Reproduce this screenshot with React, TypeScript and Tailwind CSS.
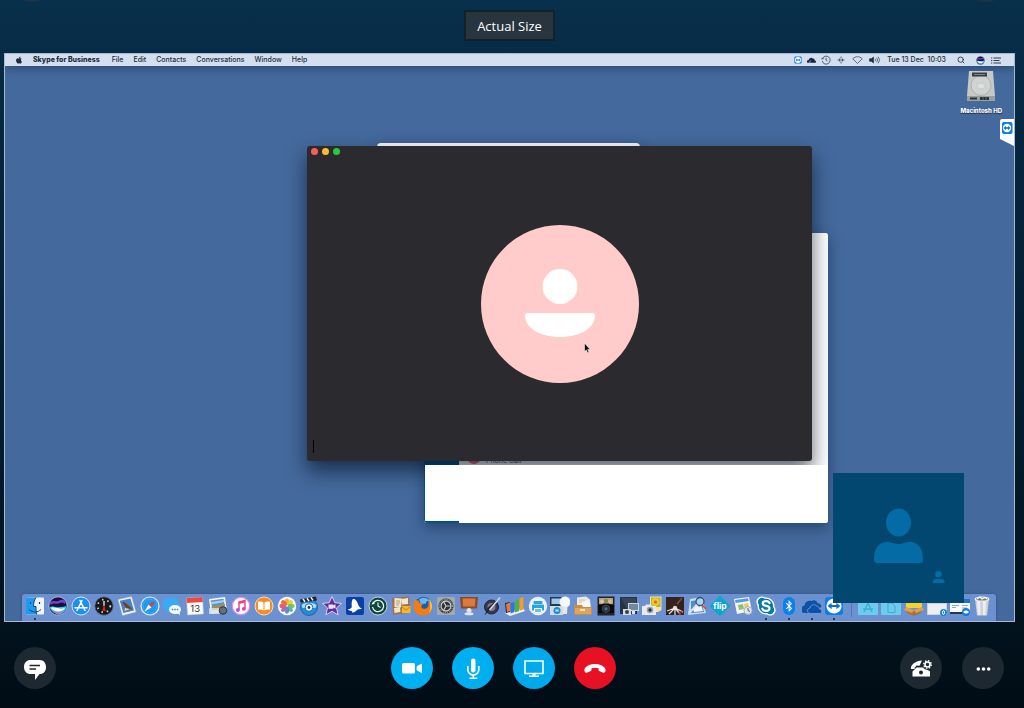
import type { ReactNode } from "react";
import { FaApple, FaBluetoothB } from "react-icons/fa";
import { Search } from "lucide-react";

type DockApp = { name: string; running?: boolean; art: ReactNode };

const TeamViewerArt = () => (
  <>
    <rect x="1" y="1" width="18" height="18" rx="3" fill="#0b7de8" />
    <circle cx="10" cy="10" r="7.6" fill="#fff" />
    <path d="M3.6 10 7.6 6.8V9h4.8V6.8l4 3.2-4 3.2V11H7.6v2.2z" fill="#0a6ed6" />
  </>
);

const SiriArt = () => (
  <>
    <circle cx="10" cy="10" r="9.2" fill="#15123c" stroke="#c9cde6" strokeWidth="0.8" />
    <path d="M2 8c3-4 6 0 9-2 3-1.500 5-1 6.500 1" fill="none" stroke="#7b3fd6" strokeWidth="2.500" />
    <path d="M1.500 11c4-2 7 2 17-1l-1 4c-2 3-5 4.500-7 4.500s-7-2-9-7.500z" fill="#2bd0ee" />
    <path d="M4 14c3 2.500 9 2.500 12 0-2 4-9 5-12 0z" fill="#e758c2" />
    <path d="M3 12c4-1.500 7 2 14 0-2 4-10 5-14 0z" fill="#fff" />
  </>
);

const apps: DockApp[] = [
  {
    name: "Finder",
    running: true,
    art: (
      <>
        <rect x="1" y="1.500" width="18" height="17" rx="1" fill="#f0f5fb" />
        <path d="M1 1.500h10c-2 3-2.500 6-2.400 9h2.400c0 3 .2 6 .8 8H1z" fill="#1e9bf0" />
        <path d="M11 1.500c-2 3-2.500 6-2.400 9H11c0 3 .2 6 .8 8M4 13.500c4 3.300 8.500 3.300 12 0" fill="none" stroke="#123a66" strokeWidth="0.9" />
        <path d="M5.500 6v2M14.500 6v2" stroke="#123a66" strokeWidth="1.200" />
      </>
    ),
  },
  { name: "Siri", art: <SiriArt /> },
  {
    name: "App Store",
    art: (
      <>
        <circle cx="10" cy="10" r="9" fill="#1b8ff2" stroke="#d9e5f4" strokeWidth="1" />
        <path d="M11 4.500 6 14.500M9 4.500l5 10M4 11.800h12" stroke="#fff" strokeWidth="1.500" strokeLinecap="round" />
      </>
    ),
  },
  {
    name: "Dashboard",
    art: (
      <>
        <circle cx="10" cy="10" r="9.200" fill="#16191c" stroke="#6d7278" strokeWidth="0.8" />
        <circle cx="10" cy="10" r="6.300" fill="none" stroke="#d5d9dc" strokeWidth="1.800" strokeDasharray="1.400 4" />
        <path d="M10 5v5" stroke="#f6f6f6" strokeWidth="1.300" />
        <path d="m10 8 1.700 7H8.300z" fill="#df1d23" />
      </>
    ),
  },
  {
    name: "Mail",
    art: (
      <>
        <path d="m1 3.500 13.500-3 4.500 15.500-13.500 3.500z" fill="#f4f4ef" stroke="#b5b5ae" strokeWidth="0.500" />
        <path d="m2.800 4.800 10.700-2.400 3.500 12-10.700 2.700z" fill="#4a83c4" />
        <path d="M5 6c3-.5 4 1 6 3 2 1 3 3 4.500 4-3 .5-4 .5-6-.8C7.500 11 7 8.500 5 6z" fill="#6a4629" />
        <path d="m8 12 5 1-5.500 2z" fill="#e2d3ab" />
      </>
    ),
  },
  {
    name: "Safari",
    art: (
      <>
        <circle cx="10" cy="10" r="9" fill="#1d9af0" stroke="#e7ebef" strokeWidth="1.200" />
        <circle cx="10" cy="10" r="7" fill="none" stroke="#8fd0fa" strokeDasharray=".5 1.200" />
        <path d="m15.500 4.500-4 7-3-3z" fill="#e73a36" />
        <path d="m4.500 15.500 4-7 3 3z" fill="#f5f7f8" />
      </>
    ),
  },
  {
    name: "Messages",
    art: (
      <>
        <path d="M9 1.500c5 0 8.500 2.900 8.500 6.900S14 15.500 9 15.500l-5 2 1-3C2 13 .5 11 .5 8.400.5 4.400 4 1.500 9 1.500z" fill="#39aaf6" />
        <ellipse cx="13" cy="13.500" rx="6" ry="4.600" fill="#fafcff" />
        <path d="m15 17 3 2-.5-3.500z" fill="#fafcff" />
        <circle cx="10.500" cy="13.500" r=".9" fill="#4a91d8" />
        <circle cx="13" cy="13.500" r=".9" fill="#4a91d8" />
        <circle cx="15.500" cy="13.500" r=".9" fill="#4a91d8" />
      </>
    ),
  },
  {
    name: "Calendar",
    art: (
      <>
        <path d="m1.500 2 16-1 1 17-16 1z" fill="#fbfbfb" stroke="#b9bec5" strokeWidth="0.500" />
        <path d="m1.500 2 16-1 .3 5-16 1z" fill="#f2473f" />
        <text x="10.200" y="16" fontSize="9.500" textAnchor="middle" fill="#333" fontFamily="Inter, sans-serif">13</text>
      </>
    ),
  },
  {
    name: "Preview",
    art: (
      <>
        <path d="m1 3 16-2 2 14-16 3z" fill="#f6f6f2" />
        <path d="m2.500 4.500 13-1.800 1.500 9.300-12 2.300z" fill="#5b93c6" />
        <path d="m3 6 13-2 .3 2-13 2.500z" fill="#a8d0ec" />
        <path d="m3.500 10.500 13-3 .6 4.700-13 2.200z" fill="#a08c66" />
        <path d="M1 12h13l-1 6H1z" fill="#dce3e8" opacity=".8" />
        <circle cx="15" cy="14.500" r="3.800" fill="#63717d" stroke="#2b333a" />
      </>
    ),
  },
  {
    name: "iTunes",
    art: (
      <>
        <circle cx="10" cy="10" r="8.700" fill="#fff" stroke="#e58ae0" strokeWidth="1.200" />
        <path d="M8 14V6l6-1.500v8" fill="none" stroke="#ee3d78" strokeWidth="1.400" />
        <path d="M8 6.500 14 5v1.600L8 8z" fill="#ee3d78" />
        <circle cx="6.900" cy="14" r="1.900" fill="#a94df0" />
        <circle cx="12.800" cy="12.800" r="1.900" fill="#e23bb0" />
      </>
    ),
  },
  {
    name: "iBooks",
    art: (
      <>
        <circle cx="10" cy="10" r="9" fill="#fb8b1c" stroke="#f4dfc5" />
        <path d="M9.500 6.500c-1.600-1.200-3.600-1.300-5.500-.8v8c2-.5 4-.3 5.500.8zM10.500 6.500c1.600-1.200 3.600-1.300 5.500-.8v8c-2-.5-4-.3-5.500.8z" fill="#fff" />
      </>
    ),
  },
  {
    name: "Photos",
    art: (
      <>
        <circle cx="10" cy="10" r="9.200" fill="#fbfbf8" />
        <g opacity=".9">
          <ellipse cx="10" cy="5.800" rx="2.200" ry="3.400" fill="#f9a52b" />
          <ellipse cx="10" cy="5.800" rx="2.200" ry="3.400" fill="#d7cf2f" transform="rotate(45 10 10)" />
          <ellipse cx="10" cy="5.800" rx="2.200" ry="3.400" fill="#72bf44" transform="rotate(90 10 10)" />
          <ellipse cx="10" cy="5.800" rx="2.200" ry="3.400" fill="#43b3a0" transform="rotate(135 10 10)" />
          <ellipse cx="10" cy="5.800" rx="2.200" ry="3.400" fill="#4a83d3" transform="rotate(180 10 10)" />
          <ellipse cx="10" cy="5.800" rx="2.200" ry="3.400" fill="#9760b8" transform="rotate(225 10 10)" />
          <ellipse cx="10" cy="5.800" rx="2.200" ry="3.400" fill="#d4526e" transform="rotate(270 10 10)" />
          <ellipse cx="10" cy="5.800" rx="2.200" ry="3.400" fill="#ee5a36" transform="rotate(315 10 10)" />
        </g>
      </>
    ),
  },
  {
    name: "DVD Player",
    art: (
      <>
        <circle cx="10" cy="11" r="8.500" fill="#1f8fdc" stroke="#0e3f70" strokeWidth=".6" />
        <path d="M2.500 9c4-3 11-3 15 0l-1 3H3.500z" fill="#a4ddfa" />
        <path d="m1 3.500 16-3 1 4-16.500 2z" fill="#202429" />
        <path d="m4 3 2 2.800M8 2.200l2 2.900M12 1.400l2 3" stroke="#f3f3f3" strokeWidth="1.500" />
        <circle cx="10" cy="11.500" r="3.800" fill="#eef5fa" stroke="#2d6aa5" />
        <circle cx="10" cy="11.500" r="1.400" fill="#1c3857" />
      </>
    ),
  },
  {
    name: "iMovie",
    art: (
      <>
        <path d="m10 .5 2.800 6.200 6.700.7-5 4.500 1.500 6.900-6-3.500-6 3.500 1.500-6.900-5-4.500 6.700-.7z" fill="#5f2e9f" stroke="#e7d9f4" strokeWidth="0.900" />
        <path d="M6.500 8.500h4.800v1l2.200-1.200v4.400l-2.200-1.200v1.200H6.500z" fill="#efe4ff" />
      </>
    ),
  },
  {
    name: "Vectorworks",
    art: (
      <>
        <rect x="1" y="1" width="18" height="18" rx="2" fill="#0a3fa6" />
        <path d="M7.500 3.500c2-1.500 4 1 5 3.500.8 2.500 2 4.500 4.500 6-2 .2-3 0-4.500.5-1.500 1.500-3 3.500-5.500 3 .5-1 0-1.700-1.500-1.800-1.500 0-2-.7-2.500-1.700 2 .2 3-.5 3.800-2C6.500 8.500 6.500 5.500 7.500 3.500z" fill="#fff" />
      </>
    ),
  },
  {
    name: "Time Machine",
    art: (
      <>
        <circle cx="10" cy="10" r="9" fill="#10453f" stroke="#c3d1cf" />
        <path d="M5 7.500a5.600 5.600 0 1 1-.5 3.500" fill="none" stroke="#e4f4ee" strokeWidth="1.300" />
        <path d="m3.500 8.500 3.500-.5-2-2.500z" fill="#e4f4ee" />
        <path d="M10 6.500V10l2.500 1.500" fill="none" stroke="#e4f4ee" strokeWidth="1.200" />
      </>
    ),
  },
  {
    name: "Stickies",
    art: (
      <>
        <path d="m1 2 17-1.500 1.500 16L2 19z" fill="#a1714a" />
        <path d="m3.500 2 7.500.5-1 9-6.500-.5zM11 3l6-1v6l-6 .5z" fill="#f1e7d0" />
        <path d="M5 5h4M5 7h4M5 9h3" stroke="#907c67" strokeWidth=".7" />
        <path d="m3 12 6-1 .5 5-6 1z" fill="#efe5cc" />
        <path d="M11 10h8.500v7H11z" fill="#f6b826" />
        <path d="m11 11 4 3 4-3" fill="none" stroke="#c98110" />
      </>
    ),
  },
  {
    name: "Firefox",
    art: (
      <>
        <circle cx="10.500" cy="9.500" r="8.800" fill="#1c5db0" />
        <path d="M6 3.500c4-3 8-2 11 1.500-3-.5-4 .5-4 2.500L8 8z" fill="#63b9ee" />
        <path d="M1.500 3.500c1.500 1 3 .8 4.500 1.500-.5 2 2 2.500 4 3C8.500 9 8 10 8.500 11.500c1.500 2 4.500 1.500 6 0 1.500-1.800 1.500-4.500 0-6.500 3 1 5 4.500 4.500 8C18 17.500 14 19.800 9.500 19.500 4 19 .3 15.500.5 10c0-2.500.5-4.500 1-6.500z" fill="#f37b13" />
        <path d="M15.500 2.500c4.500 3.500 5 10 .5 14.500 2-5 1.500-10-.5-14.500z" fill="#fcc43c" />
      </>
    ),
  },
  {
    name: "System Preferences",
    art: (
      <>
        <rect x="1" y="1" width="18" height="18" rx="1.500" fill="#a7a9a8" />
        <circle cx="10" cy="10" r="7.500" fill="#303335" />
        <circle cx="10" cy="10" r="5" fill="none" stroke="#c8caca" strokeWidth="1.300" />
        <path d="M10 10h5M10 10l-2.500-4.500M10 10l-2.500 4.500" stroke="#c8caca" strokeWidth="1.200" />
        <circle cx="10" cy="10" r="6.600" fill="none" stroke="#c8caca" strokeDasharray="1 1.100" />
      </>
    ),
  },
  {
    name: "Keynote",
    art: (
      <>
        <path d="M1 1h18l-1 11.500H2z" fill="#8c4a24" />
        <path d="M3.500 2.500h13l-.6 8H4z" fill="#dc7a39" />
        <path d="M9.300 12h1.400v6H9.300z" fill="#8ba1bb" />
        <ellipse cx="10" cy="17.800" rx="4.500" ry="1.500" fill="#dfe7f0" />
        <circle cx="10" cy="14.500" r="2.500" fill="#dbe2ea" />
      </>
    ),
  },
  {
    name: "GarageBand",
    art: (
      <>
        <circle cx="9.500" cy="11" r="7" fill="#38384a" stroke="#252635" />
        <circle cx="9.500" cy="11" r="4" fill="#7c7c98" />
        <path d="M18.500 1 9 13l-6.500 6.500L6 11.500z" fill="#21252e" />
        <path d="M18 1.500 7.500 14" stroke="#dbe0e9" strokeWidth="1.500" />
      </>
    ),
  },
  {
    name: "Numbers",
    art: (
      <>
        <path d="m0 17 18-5 2 3-15 5z" fill="#f1f3f7" />
        <path d="m0 7 5-1v10l-4 1z" fill="#1e2b3a" />
        <path d="m1 8 4-1.500V15l-3 1z" fill="#f0782a" />
        <path d="m5.500 7 4-1v10l-4 1.500z" fill="#2f72e6" />
        <path d="m10 4.500 4-1V15l-4 1.500z" fill="#4cb33f" />
        <path d="m14.500 2 4-1v12.500l-4 1.300z" fill="#f29b28" />
      </>
    ),
  },
  {
    name: "Printer",
    art: (
      <>
        <circle cx="10" cy="10" r="9.200" fill="#eef6fb" />
        <circle cx="10" cy="10" r="7.700" fill="#fff" stroke="#c5dbe8" strokeWidth=".5" />
        <path d="M5.500 5h9v3h-9zM4 8.500h12v6h-2V12H6v2.500H4z" fill="#2aa5dc" />
        <path d="M7 13h6v3H7z" fill="#63c0e7" />
      </>
    ),
  },
  {
    name: "HP Utility",
    art: (
      <>
        <path d="M0 1h12v9H0z" fill="#26394b" />
        <path d="M1.500 2.500h9V8h-9z" fill="#9cc8ea" />
        <path d="M0 10h13v9H0z" fill="#d4dbe0" />
        <circle cx="7" cy="14.500" r="3.500" fill="#168bd4" />
        <path d="M6 13v3M8 13v3M6 14.500h2" stroke="#fff" strokeWidth=".7" />
        <circle cx="15" cy="6" r="5.500" fill="#f6f9fa" stroke="#c2cacf" strokeWidth=".5" />
        <path d="M12.500 10.500h5L17 18h-4z" fill="#e3e8ea" />
      </>
    ),
  },
  {
    name: "Archive",
    art: (
      <>
        <path d="m4 1.500 9-1 4 3v9H4z" fill="#ece9df" />
        <path d="M6 4h6M6 6h7" stroke="#b6b4aa" strokeWidth="0.6" />
        <path d="m9 6 8-2 1 9H9z" fill="#f9f8f4" />
        <path d="M1 9h8l1 2h9v8H1z" fill="#c98c46" />
        <path d="M2 12h16v6H2z" fill="#dca75c" />
        <path d="M7 13h5v2H7z" fill="#f2e4c4" />
      </>
    ),
  },
  {
    name: "Photo Booth",
    art: (
      <>
        <rect x="1.500" y=".5" width="17" height="19" fill="#23251f" />
        <path d="M3 2h14v6H3z" fill="#b3a184" />
        <circle cx="6" cy="5.500" r="2" fill="#e5c0a1" />
        <circle cx="10" cy="5" r="2" fill="#7c8b3e" />
        <circle cx="14" cy="5.500" r="2" fill="#dfb694" />
        <path d="M2 9h4l1-1.500h6L14 9h4v8H2z" fill="#0b0c0e" />
        <circle cx="10" cy="12.800" r="3.700" fill="#27313d" stroke="#3b444e" />
        <circle cx="10" cy="12.800" r="1.600" fill="#4570a0" />
      </>
    ),
  },
  {
    name: "Image Capture Display",
    art: (
      <>
        <path d="M1 1h17v17H1z" fill="#26323e" />
        <path d="m2 2 8 15h7V2z" fill="#344657" />
        <path d="M9 7h11v8H9z" fill="#cbd4dc" />
        <path d="M10 8h9v6h-9z" fill="#72889b" />
        <path d="M13 15h3v3h-3z" fill="#e0e5e9" />
        <path d="M4 13h8v6H4z" fill="#d4dadf" />
        <circle cx="8" cy="16" r="2" fill="#34404b" />
      </>
    ),
  },
  {
    name: "iPhoto",
    art: (
      <>
        <path d="M8 .5h11.500V14L16 16H8z" fill="#f6e3aa" />
        <path d="M9 1.500h9.500V11H9z" fill="#a5b942" />
        <circle cx="13.500" cy="6" r="4" fill="#f4c723" />
        <circle cx="13.500" cy="6" r="1.600" fill="#df6428" />
        <path d="M0 10h3l1-1.500h5l1 1.500h4v9H0z" fill="#e7ebee" />
        <circle cx="8" cy="14" r="3.300" fill="#9ba5ae" />
        <circle cx="8" cy="14" r="1.700" fill="#293540" />
      </>
    ),
  },
  {
    name: "Scanner",
    art: (
      <>
        <rect x="1" y="1" width="18" height="18" fill="#33221d" />
        <path d="m12 8 5-6" fill="none" stroke="#795044" strokeWidth="1.500" />
        <circle cx="10" cy="12" r="2.200" fill="#ddd7cb" />
        <path d="m10 12-8 3M10 12l-6 6M10 12v7M10 12l5 6M10 12l8 4" stroke="#eae6df" strokeWidth="1.200" />
        <path d="m16 15 2 2M14 16l1 3" stroke="#db3c28" strokeWidth="1.400" />
      </>
    ),
  },
  {
    name: "Directory Utility",
    art: (
      <>
        <path d="m3 3 12-2 4 16-18 2z" fill="#cfdae3" />
        <path d="m4 5 10-1 3 12-13 1z" fill="#4c8fd0" />
        <path d="m6 12 3-4 3 3 2-2 2 6-9 1z" fill="#f3f6f8" />
        <circle cx="13" cy="5.500" r="4" fill="#a6d4f0" stroke="#34506a" strokeWidth="1.300" />
        <path d="m10 9-8 8" stroke="#e1e5e9" strokeWidth="2" />
        <path d="m15 9 4 4" stroke="#d5473e" strokeWidth="1.600" />
      </>
    ),
  },
  {
    name: "Flip",
    art: (
      <>
        <path d="M10-.5 20.500 10 10 20.500-.5 10z" fill="#10a5cd" />
        <text x="10" y="12.500" textAnchor="middle" fontSize="8.500" fontWeight="700" fill="#fff" fontFamily="Inter, sans-serif">flip</text>
      </>
    ),
  },
  {
    name: "Maps",
    art: (
      <>
        <path d="m1 3 15-2 3 14-15 3z" fill="#f5f4ef" />
        <path d="m2 4 13-1.700.7 2.700-13 2z" fill="#4e9ce8" />
        <path d="m5 9 5-1 1 5-5 1z" fill="#8ac26a" />
        <path d="m11 8 4-1 1 5-4 1z" fill="#f5c64f" />
        <circle cx="15" cy="14.500" r="4" fill="#e1e6ea" stroke="#aab3ba" />
        <path d="M15 12v2.500l2 1" fill="none" stroke="#53606b" />
      </>
    ),
  },
  {
    name: "Skype",
    running: true,
    art: (
      <>
        <circle cx="10" cy="10" r="8.500" fill="#fff" />
        <circle cx="5.800" cy="5.800" r="5.400" fill="#fff" />
        <circle cx="14.200" cy="14.200" r="5.400" fill="#fff" />
        <circle cx="10" cy="10" r="7.200" fill="#0a78a8" />
        <circle cx="6" cy="6" r="4.200" fill="#0a78a8" />
        <circle cx="14" cy="14" r="4.200" fill="#0a78a8" />
        <path d="M13.500 7c-.5-1.300-2-1.800-3.500-1.800S6.700 5.900 6.700 7.500c0 3.200 6.800 1.600 6.800 4.700 0 1.700-1.600 2.600-3.500 2.600s-3.200-.7-3.600-2.100" fill="none" stroke="#fff" strokeWidth="2.200" strokeLinecap="round" />
      </>
    ),
  },
  {
    name: "Bluetooth",
    running: true,
    art: (
      <>
        <rect x="4" y="1" width="12" height="18" rx="6" fill="#0c7ff0" />
        <FaBluetoothB x="4" y="4" size="12" color="#fff" />
      </>
    ),
  },
  {
    name: "OneDrive",
    running: true,
    art: (
      <>
        <path d="M0 16c-2-4 0-6 2.500-6.500C3 6 6 4 9.500 5c2-1.500 5-1 6 2 3 .5 4 2 3.800 4L7 17H2c-1 0-1.600-.3-2-1z" fill="#0c52a8" />
        <path d="M8 17.500c-4-1-3-5 0-5.500.5-3 4-4.500 6.500-2 2 .2 2.700 1.500 2.800 2.800 3 .4 3.400 4.200.7 4.700z" fill="#0c52a8" stroke="#7195d1" />
      </>
    ),
  },
  { name: "TeamViewer", running: true, art: <TeamViewerArt /> },
];

const places: DockApp[] = [
  {
    name: "Applications",
    art: (
      <>
        <rect y="2" width="20" height="17" rx="1" fill="#6bccee" />
        <path d="m10 7-4 9M10 7l4 9M5 13h10" stroke="#42a9d3" strokeWidth="1.300" />
      </>
    ),
  },
  {
    name: "Documents",
    art: (
      <>
        <rect y="2" width="20" height="17" rx="1" fill="#6bccee" />
        <path d="M7 7h4l3 3v6.500H7z" fill="none" stroke="#42a9d3" />
      </>
    ),
  },
  {
    name: "Downloads",
    art: (
      <>
        <path d="m2 4 8-3 8 3v8H2z" fill="#f6d22d" />
        <path d="m2 12 8 3 8-3-1 5-7 3-7-3z" fill="#b0702d" />
        <path d="m2 11 8 3-2 3-8-3zM18 11l-8 3 2 3 8-3z" fill="#dca056" />
      </>
    ),
  },
  {
    name: "Minimized document",
    art: (
      <>
        <path d="M0 3h20v16H0z" fill="#cdd2d8" />
        <path d="M1 8h18v10H1z" fill="#eceef0" />
        <circle cx="16.500" cy="16.500" r="3.500" fill="#1b82e2" />
        <ellipse cx="16.500" cy="16.500" rx="1" ry="2" fill="none" stroke="#fff" />
      </>
    ),
  },
  {
    name: "Minimized TeamViewer",
    art: (
      <>
        <path d="M0 3h20v15H0z" fill="#f8fafc" />
        <path d="M0 3h20v4H0z" fill="#226ed2" />
        <path d="M2 9.500h7M2 11.500h4M12 9.500h6M12 12h5" stroke="#8aabce" />
        <path d="M0 16h14v2H0z" fill="#25384f" />
        <circle cx="16" cy="16" r="4" fill="#1379dc" />
        <path d="m13 16 2-1.500h2l2 1.500-2 1.500h-2z" fill="#fff" />
      </>
    ),
  },
  {
    name: "Trash",
    art: (
      <>
        <path d="M3 3h14l-2 16.500H5z" fill="#cfd3d6" />
        <path d="M5 5h3l.5 14H6zM11 5h3l-.7 14H11z" fill="#eceeef" />
        <ellipse cx="10" cy="3" rx="7.500" ry="2.500" fill="#f5f6f6" />
        <ellipse cx="10" cy="3" rx="6" ry="1.600" fill="#777" />
        <path d="m5 3 3-2 2 2 3-1.500L15 3" fill="none" stroke="#fff" strokeWidth="1.300" />
      </>
    ),
  },
];

function DockItem({ name, running, art }: DockApp) {
  return (
    <button type="button" aria-label={name} className="flex h-full min-w-0 flex-1 flex-col items-center pt-[2px]">
      <svg viewBox="0 0 20 20" className="size-5" aria-hidden="true">{art}</svg>
      {running && <span className="mt-[2px] size-[2px] rounded-full bg-[#101c40]" />}
    </button>
  );
}

function MenuBar() {
  const menus = ["File", "Edit", "Contacts", "Conversations", "Window", "Help"];
  return (
    <nav
      aria-label="Menu bar"
      className="relative flex h-[12px] items-center justify-between bg-[#d3dfee] pr-[13px] pl-[10px] text-[7px] leading-[12px] font-medium text-[#1c2b3d] shadow-[0_2px_10px_rgba(20,50,80,0.6)]"
    >
      <div className="flex items-center gap-[10px]">
        <button type="button" aria-label="Apple menu">
          <FaApple className="size-[8px]" />
        </button>
        <button type="button" className="mr-[2px] font-extrabold">Skype for Business</button>
        {menus.map((menu) => (
          <button key={menu} type="button">{menu}</button>
        ))}
      </div>
      <div className="flex items-center gap-[5px]">
        <svg viewBox="0 0 20 20" className="size-[8px]" aria-hidden="true"><TeamViewerArt /></svg>
        <svg viewBox="0 0 20 12" className="h-[6px] w-[9px]" aria-hidden="true">
          <path d="M0 11c-1-4 2-5 4-5 1-5 7-7 9-3 3-.5 4 2 4 4 3 0 4 4 2 5H1z" fill="#17263a" />
          <path d="M6 12c-1-3 1-4 3-4" fill="none" stroke="#d3dfee" strokeWidth="1.500" />
        </svg>
        <svg viewBox="0 0 20 20" className="size-[10px]" fill="none" stroke="#34465b" strokeWidth="1.700" aria-hidden="true">
          <path d="M3 7a8 8 0 1 1-.5 5M10 5.500V10l3 2M.5 7.500h5" />
        </svg>
        <svg viewBox="0 0 16 16" className="mx-px size-[8px]" stroke="#34465b" strokeWidth="1.600" aria-hidden="true">
          <path d="M1 8h14M8 1v4M8 11v4M5 5v6M11 5v6" />
        </svg>
        <svg viewBox="0 0 22 16" className="mx-px h-[8px] w-[11px]" fill="none" stroke="#34465b" strokeWidth="1.500" aria-hidden="true">
          <path d="M1.500 5.500C7 0 15 0 20.500 5.500L11 15z" />
        </svg>
        <svg viewBox="0 0 22 16" className="mr-[2px] h-[8px] w-[11px]" fill="none" stroke="#34465b" strokeWidth="1.500" aria-hidden="true">
          <path d="M1 5.500h3.500L9 2v12l-4.500-3.500H1z" fill="#1c2b3d" />
          <path d="M12 5.500c1.200 1.500 1.200 3.500 0 5M15 3.500c2.500 3 2.500 6 0 9M18 1.500c3.500 4 3.500 9 0 13" />
        </svg>
        <time className="whitespace-pre">Tue 13 Dec  10:03</time>
        <button type="button" aria-label="Search" className="mx-[6px]"><Search className="size-[8px]" strokeWidth={2.5} /></button>
        <button type="button" aria-label="Siri" className="mr-px">
          <svg viewBox="0 0 20 20" className="size-[9px]" aria-hidden="true"><SiriArt /></svg>
        </button>
        <button type="button" aria-label="Notification center">
          <svg viewBox="0 0 20 14" className="h-[7px] w-[10px]" stroke="#1c2b3d" strokeWidth="1.800" aria-hidden="true">
            <path d="M5 2h15M5 7h12M5 12h15M0 2h2.500M0 7h2.500M0 12h2.500" />
          </svg>
        </button>
      </div>
    </nav>
  );
}

function DesktopWindows() {
  return (
    <>
      <div className="absolute top-[89px] left-[372px] h-10 w-[263px] rounded-t-sm bg-[#f4f7f9] shadow-[0_4px_14px_rgba(10,35,70,0.4)]" />

      <section
        aria-label="Skype for Business window"
        className="absolute top-[179px] left-[419px] flex h-[290px] w-[404px] overflow-hidden rounded-[3px] bg-white shadow-[0_5px_14px_rgba(10,35,70,0.5)]"
      >
        <div className="w-[35px] bg-[#00557f]" />
        <div className="relative flex flex-1 items-end gap-[5px] bg-white pb-[58px] pl-[8px] text-[7px] leading-[8px] text-[#555]">
          <span className="mb-px size-[14px] rounded-full bg-[#e56a74]" />
          <span>Phone Call</span>
        </div>
      </section>

      <section
        aria-label="Video call window"
        className="absolute top-[92px] left-[302px] flex h-[315px] w-[505px] items-center justify-center rounded-[3px] bg-[#2b2a2f] shadow-[0_10px_20px_rgba(5,15,35,0.65)]"
      >
        <div className="absolute top-[2px] left-1 flex gap-[4px]">
          <button type="button" aria-label="Close" className="size-[7px] rounded-full bg-[#fc5b57]" />
          <button type="button" aria-label="Minimize" className="size-[7px] rounded-full bg-[#fdbc2e]" />
          <button type="button" aria-label="Zoom window" className="size-[7px] rounded-full bg-[#27c93f]" />
        </div>
        <span className="absolute bottom-2 left-[6px] h-[13px] w-px bg-black" />
        <svg viewBox="0 0 158 158" className="size-[158px]" role="img" aria-label="Participant">
          <circle cx="79" cy="79" r="79" fill="#ffcccb" />
          <circle cx="79" cy="61.500" r="17.500" fill="#fff" />
          <path d="M46.500 88h65q2.500 0 2.500 2.500c0 12-14 21.500-35 21.500s-35-9.500-35-21.500q0-2.500 2.500-2.500z" fill="#fff" />
          <path d="m103.500 118 0 8.500 1.800-1.500 1.300 2.700 1.400-.7-1.300-2.500h2.400z" fill="#111" stroke="#fff" strokeWidth=".5" />
        </svg>
      </section>

      <div className="absolute top-[411px] left-[420px] flex w-[403px] items-start">
        <div className="h-[56px] w-[34px] bg-white" />
        <div className="h-[58px] flex-1 rounded-br-[3px] bg-white" />
      </div>
    </>
  );
}

function DesktopIcons() {
  return (
    <>
      <div className="absolute top-[16px] right-[12px] flex flex-col items-center gap-[5px] text-[6px] leading-[8px] font-extrabold text-white [text-shadow:0_1px_1px_rgba(0,0,0,0.6)]">
        <svg viewBox="0 0 30 32" className="h-[32px] w-[30px]" aria-hidden="true">
          <path d="M3 1h24l2 25v5H1v-5z" fill="#c5cac9" />
          <path d="M1 26h28v4q0 1-1 1H2q-1 0-1-1z" fill="#9ba09f" />
          <circle cx="15" cy="15.500" r="10" fill="#cfd4d3" stroke="#adb3b2" />
          <ellipse cx="15" cy="16" rx="4" ry="3" fill="#dde0df" stroke="#bcc2c1" strokeWidth=".6" />
          <path d="M6 2.500h15v4H6z" fill="#3e3c3c" />
          <path d="M8 4.500h11" stroke="#8a7e7b" />
          <path d="M4 27.500h7v2H4zM14 27h9v3h-9z" fill="#303231" />
          <path d="M17 27v3M20 27v3" stroke="#858988" strokeWidth=".6" />
        </svg>
        <span>Macintosh HD</span>
      </div>
      <svg viewBox="0 0 14 27" className="absolute top-[65px] right-0 h-[27px] w-[14px]" role="img" aria-label="TeamViewer panel">
        <path d="M2 0h12v27L0 20V2q0-2 2-2z" fill="#fafcfe" />
        <rect x="2" y="3" width="10.500" height="12" rx="2" fill="#0b7de8" />
        <circle cx="7" cy="9" r="4.200" fill="#fff" />
        <path d="m3.500 9 2.500-2v1.200h2V7l2.500 2L8 11V9.800H6V11z" fill="#0a6ed6" />
      </svg>
    </>
  );
}

function SelfView() {
  return (
    <div className="absolute right-[50px] bottom-[18px] h-[130px] w-[131px] bg-[#02476f]">
      <svg viewBox="0 0 131 130" className="size-full" fill="#046ba5" role="img" aria-label="Your video">
        <ellipse cx="65.500" cy="49.500" rx="12.500" ry="14" />
        <path d="M41 87c0-11 4-18 13-18 5 0 7 2 11.500 2S72 69 77 69c9 0 13 7 13 18q0 3-3 3H44q-3 0-3-3z" />
        <circle cx="105.500" cy="101.300" r="3.300" />
        <path d="M100 110v-1.500q0-2.500 3-2.500h5.500q3 0 3 2.500v1.500z" />
      </svg>
    </div>
  );
}

function RoundButton({ label, tone, children }: { label: string; tone: string; children: ReactNode }) {
  return (
    <button type="button" aria-label={label} className={`flex size-[42px] items-center justify-center rounded-full ${tone}`}>
      <svg viewBox="0 0 42 42" className="size-[42px]" aria-hidden="true">{children}</svg>
    </button>
  );
}

function CallControls() {
  return (
    <footer className="grid grid-cols-[1fr_auto_1fr] items-center pt-[25px] pr-5 pb-[19px] pl-[14px]">
      <div>
        <RoundButton label="Chat" tone="bg-[#1d2830]">
          <path d="M17 13h8.500c4 0 6.500 2.800 6.500 7 0 4.300-2.200 7-6.500 7l-4.500 6v-6h-4c-4.500 0-7-2.700-7-7s2.500-7 7-7z" fill="#fff" />
          <path d="M15.500 18.500h10.500M15.500 22H22" stroke="#1d2830" strokeWidth="1.600" />
        </RoundButton>
      </div>
      <div className="flex gap-[19px] pr-[12px]">
        <RoundButton label="Video" tone="bg-[#00aff0]">
          <rect x="11" y="16" width="13" height="10.500" rx="1.500" fill="#fff" />
          <path d="M26 19.500 30.500 17v8.500L26 23z" fill="#fff" stroke="#fff" strokeWidth=".8" strokeLinejoin="round" />
        </RoundButton>
        <RoundButton label="Microphone" tone="bg-[#00aff0]">
          <rect x="19" y="11.500" width="4.500" height="14" rx="2.200" fill="#fff" />
          <path d="M15.800 19v3.500a5.500 5.500 0 0 0 11 0V19M21.300 28v3M17.500 31.300h7.700" fill="none" stroke="#fff" strokeWidth="1.600" />
        </RoundButton>
        <RoundButton label="Share screen" tone="bg-[#00a8ec]">
          <path d="M12 14h18v12.500H12z" fill="none" stroke="#fff" strokeWidth="1.600" />
          <path d="M19.500 27h3v1.500H26V30H16v-1.500h3.500z" fill="#fff" />
        </RoundButton>
        <RoundButton label="Hang up" tone="bg-[#e81123]">
          <path d="M10.500 24c-.8-4.300 5-7 10.500-7s11.200 2.700 10.500 7c-.2 1.500-1.400 2-2.800 1.500l-3-1.200c-1-.4-1.300-1-1.200-2l.1-1c-2.300-.8-4.800-.8-7.200 0l.1 1c.1 1-.3 1.600-1.200 2l-3 1.200c-1.400.5-2.500 0-2.800-1.500z" fill="#fff" />
        </RoundButton>
      </div>
      <div className="flex justify-end gap-5">
        <RoundButton label="Call settings" tone="bg-[#1d2830]">
          <path d="M11 22c-1-4 5-8.500 11-8.500l-2.500 5.200-3-.2-2 2.500.3 1z" fill="#fff" />
          <path d="M12.500 29.500v-5l4-4h7.500l6 4v5z" fill="#fff" />
          <circle cx="21" cy="25.500" r="2" fill="#1d2830" />
          <circle cx="27.500" cy="17.500" r="5.200" fill="#1d2830" />
          <circle cx="27.500" cy="17.500" r="3.700" fill="none" stroke="#fff" strokeWidth="1.500" strokeDasharray="1.450 1.450" />
          <circle cx="27.500" cy="17.500" r="2.500" fill="none" stroke="#fff" strokeWidth="1.600" />
        </RoundButton>
        <RoundButton label="More options" tone="bg-[#1d2830]">
          <g fill="#fff">
            <circle cx="16.300" cy="22" r="1.800" />
            <circle cx="21.500" cy="22" r="1.800" />
            <circle cx="26.700" cy="22" r="1.800" />
          </g>
        </RoundButton>
      </div>
    </footer>
  );
}

export default function App() {
  return (
    <div className="relative flex min-h-screen flex-col overflow-hidden bg-[linear-gradient(180deg,#082f4b_0%,#06263f_20%,#031a2b_65%,#02131d_88%,#010c15_100%)] font-[Inter,'Liberation_Sans',sans-serif]">
      <span className="absolute -top-10 left-[11px] size-[42px] rounded-full bg-[#1d3444]" />
      <span className="absolute -top-10 right-[17px] size-[42px] rounded-full bg-[#1d3444]" />
      <header className="mr-[9px] ml-1 flex h-[53px] items-start justify-center pt-[10px]">
        <button
          type="button"
          className="h-[31px] border-2 border-[#14212b] bg-[#28353f] px-[11px] font-['Open_Sans','Noto_Sans',sans-serif] text-[13px] leading-[26px] text-white"
        >
          Actual Size
        </button>
      </header>
      <main className="relative mr-[9px] ml-1 flex flex-1 flex-col justify-between overflow-hidden border border-[#a9bad0] bg-[#44699c]">
        <MenuBar />
        <DesktopWindows />
        <DesktopIcons />
        <div aria-label="Dock" role="toolbar" className="mr-[18px] ml-[17px] flex h-[27px] rounded-t-[3px] bg-[#6b91d1] px-[2px] shadow-[0_0_3px_rgba(20,40,90,0.4)]">
          {apps.map((app) => (
            <DockItem key={app.name} {...app} />
          ))}
          <div className="flex w-[11px] justify-center py-1">
            <span className="w-px bg-[#5377b4]" />
          </div>
          {places.map((place) => (
            <DockItem key={place.name} {...place} />
          ))}
        </div>
        <SelfView />
      </main>
      <CallControls />
    </div>
  );
}
